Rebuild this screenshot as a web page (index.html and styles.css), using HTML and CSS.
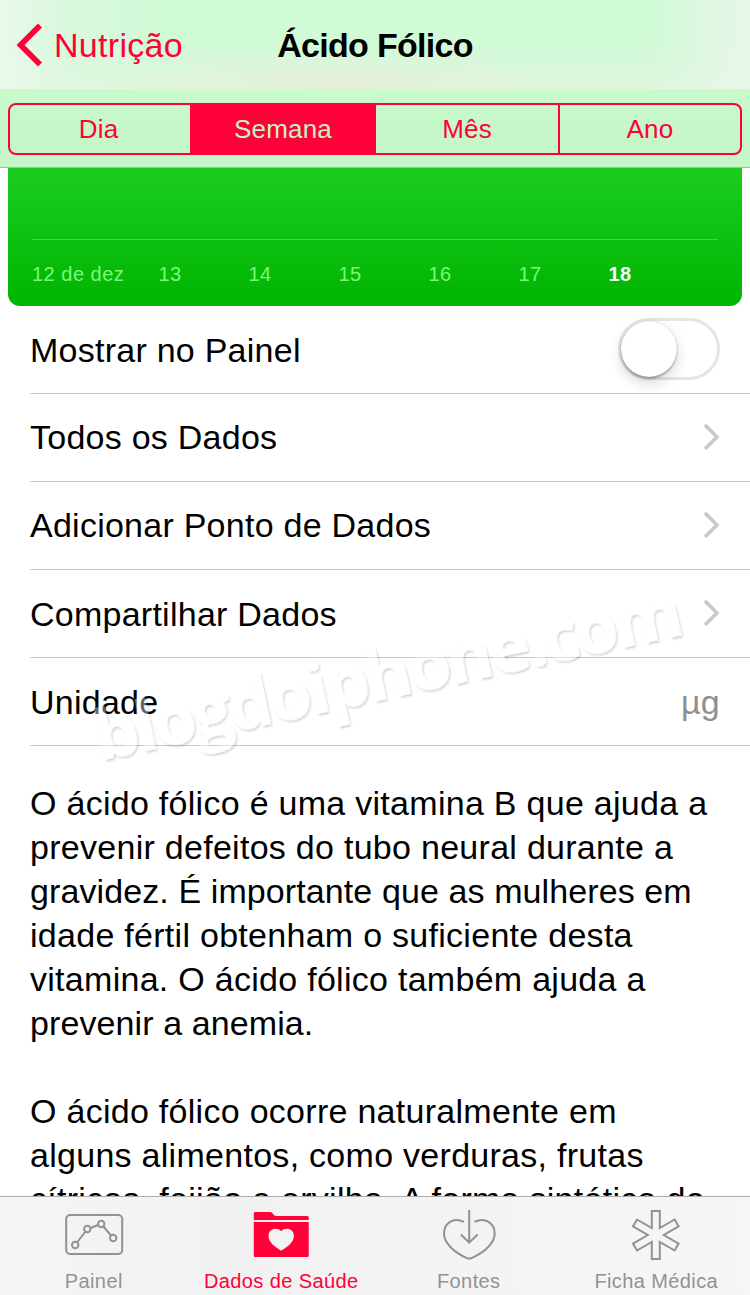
FILE: index.html
```html
<!DOCTYPE html>
<html lang="pt-BR">
	<head>
		<meta charset="utf-8">
		<title>Ácido Fólico</title>
		<link rel="stylesheet" href="styles.css">
	</head>
	<body>
		<div class="screen">
			<header class="navbar">
				<a class="back">
					<svg width="27" height="44" viewBox="0 0 27 44"><path d="M24 2.500L4.500 22l19.500 19.500" fill="none" stroke="#ff0038" stroke-width="5.600"/></svg>
					<span>Nutrição</span>
				</a>
				<h1>Ácido Fólico</h1>
			</header>

			<div class="range">
				<div class="segments">
					<span class="segment">Dia</span>
					<span class="segment active">Semana</span>
					<span class="segment">Mês</span>
					<span class="segment">Ano</span>
				</div>
			</div>

			<div class="chart">
				<div class="days">
					<span class="first">12 de dez</span>
					<span>13</span>
					<span>14</span>
					<span>15</span>
					<span>16</span>
					<span>17</span>
					<span class="today">18</span>
				</div>
			</div>

			<main class="content">
				<ul class="rows">
					<li class="row"><span>Mostrar no Painel</span><span class="switch"></span></li>
					<li class="row link"><span>Todos os Dados</span>
						<svg class="chevron" width="18" height="28" viewBox="0 0 18 28"><path d="M3 2L15 14 3 26"/></svg></li>
					<li class="row link"><span>Adicionar Ponto de Dados</span>
						<svg class="chevron" width="18" height="28" viewBox="0 0 18 28"><path d="M3 2L15 14 3 26"/></svg></li>
					<li class="row"><span>Compartilhar Dados</span>
						<svg class="chevron" width="18" height="28" viewBox="0 0 18 28"><path d="M3 2L15 14 3 26"/></svg></li>
					<li class="row"><span>Unidade</span><span class="unit">µg</span></li>
				</ul>

				<div class="about">
					<p>O ácido fólico é uma vitamina B que ajuda a<br>
					prevenir defeitos do tubo neural durante a<br>
					<span class="tight">gravidez. É importante que as mulheres em</span><br>
					idade fértil obtenham o suficiente desta<br>
					vitamina. O ácido fólico também ajuda a<br>
					<span class="tight">prevenir a anemia.</span></p>
					<p>O ácido fólico ocorre naturalmente em<br>
					alguns alimentos, como verduras, frutas<br>
					cítricas, feijão e ervilha. A forma sintética do</p>
				</div>
			</main>

			<nav class="tabbar">
				<a class="tab">
					<svg width="60" height="52" viewBox="0 0 60 52" fill="none" stroke="#929292" stroke-width="2">
						<rect x="2.200" y="7" width="56" height="39" rx="4"/>
						<path d="M13 34.500l8.500-11M26.500 20l7.500-3M39.500 18.500l7.500 9"/>
						<circle cx="11.200" cy="37" r="3.200"/>
						<circle cx="23.300" cy="21" r="3.200"/>
						<circle cx="37.200" cy="16" r="3.200"/>
						<circle cx="49.200" cy="30" r="3.200"/>
					</svg>
					<span>Painel</span>
				</a>
				<a class="tab selected">
					<svg width="60" height="52" viewBox="0 0 60 52" fill="#ff0038">
						<path d="M2.750 12V5.500q0-1.500 1.500-1.500H19q2 0 3 2l.5.500q1 1.500 3 1.500h30.700q1.500 0 1.500 1.500V12z"/>
						<path fill-rule="evenodd" d="M2.750 14h55v33.500q0 1.500-1.500 1.500h-52q-1.500 0-1.500-1.500zM30.200 42.800C36 39 42.900 34.500 42.900 28C42.900 20.500 34.500 18.800 30.200 23.200C25.900 18.800 17.500 20.500 17.500 28C17.500 34.500 24.500 39 30.200 42.800z"/>
					</svg>
					<span>Dados de Saúde</span>
				</a>
				<a class="tab">
					<svg width="60" height="52" viewBox="0 0 60 52" fill="none" stroke="#929292" stroke-width="2">
						<path d="M25 13.900C14.500 9 5 15 5 25.500C5 35 15 44.500 28 50.100Q30.200 51.100 32.400 50.100C45.500 44.500 55.700 35 55.700 25.500C55.700 15 46 9 35.400 13.900"/>
						<path d="M30.200 2v32M21.800 26.500l8.400 8 8.400-8"/>
					</svg>
					<span>Fontes</span>
				</a>
				<a class="tab">
					<svg width="60" height="52" viewBox="0 0 60 52" fill="none" stroke="#929292" stroke-width="2">
						<path transform="translate(29.800 27)" d="M-4-24H4V-6.900L18.800-15.500 22.800-8.600 8 0 22.800 8.600 18.800 15.500 4 6.900V24H-4V6.900L-18.800 15.500-22.800 8.600-8 0-22.800-8.600-18.800-15.500-4-6.900z"/>
					</svg>
					<span>Ficha Médica</span>
				</a>
			</nav>

			<svg class="watermark" width="750" height="260" viewBox="0 -20 750 260">
				<defs>
					<filter id="emboss" x="-5%" y="-20%" width="110%" height="140%">
						<feGaussianBlur in="SourceAlpha" stdDeviation="1"/>
						<feOffset dx="1" dy="2" result="shade"/>
						<feComposite in="shade" in2="SourceAlpha" operator="out"/>
						<feComponentTransfer result="edge"><feFuncA type="linear" slope=".19"/></feComponentTransfer>
						<feComponentTransfer in="SourceGraphic" result="face"><feFuncA type="linear" slope=".4"/></feComponentTransfer>
						<feMerge><feMergeNode in="edge"/><feMergeNode in="face"/></feMerge>
					</filter>
				</defs>
				<text transform="translate(100 201) rotate(-12.200)" textLength="600" fill="#fff" filter="url(#emboss)">blogdoiphone.com</text>
			</svg>
		</div>
	</body>
</html>
```
FILE: styles.css
```css
* {
	box-sizing: border-box;
}

body {
	margin: 0;
	background: #fff;
	color: #000;
	font-family: "Liberation Sans", Arial, sans-serif;
	font-size: 34px;
}

.screen {
	position: relative;
	display: flex;
	flex-direction: column;
	width: 750px;
	height: 1295px;
	overflow: hidden;
}

/* top bars */
.navbar {
	flex: none;
	display: grid;
	grid-template-columns: 1fr auto 1fr;
	align-items: center;
	height: 89px;
	padding: 2px 16px 0;
	background:
		radial-gradient(ellipse 240px 40px at 340px 89px, rgba(230, 238, 218, .9), transparent),
		linear-gradient(to right, #eaf8eb, rgba(225, 248, 226, .6) 60px, transparent 160px, transparent 650px, #e8f6e9),
		linear-gradient(#d1fad6 50%, #dff6de);
}

.back {
	display: flex;
	align-items: center;
	gap: 11px;
	color: #ff0038;
	letter-spacing: .3px;
}

.back svg {
	margin-bottom: 2px;
}

.navbar h1 {
	margin: 0;
	font-size: 34px;
	letter-spacing: -.7px;
}

.range {
	flex: none;
	height: 79px;
	padding: 14px 8px 0;
	background: linear-gradient(#c9facc, #c3f5c6);
	border-bottom: 1px solid #a5b9a7;
}

.segments {
	display: grid;
	grid-template-columns: 180px 186px 182px 182px;
	height: 52px;
	border: 2px solid #ff0038;
	border-radius: 8px;
}

.segment {
	color: #ff0038;
	font-size: 26px;
	line-height: 48px;
	text-align: center;
	letter-spacing: .2px;
}

.segment:first-child {
	padding-right: 3px;
}

.segment.active {
	background: #ff0038;
	color: #c9f2c4;
}

.segment:last-child {
	border-left: 2px solid #ff0038;
}

/* chart */
.chart {
	flex: none;
	height: 138px;
	margin: 0 8px;
	padding: 71px 24px 0;
	background: linear-gradient(#1ccd20, #00b400);
	border-radius: 0 0 12px 12px;
}

.days {
	display: grid;
	grid-template-columns: 93px repeat(6, 90px);
	border-top: 1px solid #18f51c;
	padding-top: 22px;
	color: #7cf97c;
	font-size: 20px;
	line-height: 24px;
	text-align: center;
	letter-spacing: .5px;
}

.days .first {
	text-align: left;
	white-space: nowrap;
}

.days .today {
	color: #fff;
	font-weight: bold;
}

/* list */
.content {
	flex: 1;
	min-height: 0;
	overflow: hidden;
}

.rows {
	margin: 0;
	padding: 0 0 0 30px;
	list-style: none;
}

.row {
	display: flex;
	align-items: center;
	justify-content: space-between;
	height: 88px;
	padding-top: 1px;
	padding-right: 30px;
	border-bottom: 1px solid #c8c7cc;
	letter-spacing: .25px;
}

.row.link span {
	margin-bottom: 2px;
}

.chevron {
	margin-bottom: 2px;
	fill: none;
	stroke: #c7c7cc;
	stroke-width: 3.500;
}

.unit {
	color: #8e8e93;
}

.switch {
	width: 102px;
	height: 62px;
	border: 3px solid #e5e5e5;
	border-radius: 31px;
	margin-bottom: 2px;
}

.switch::before {
	content: "";
	display: block;
	width: 56px;
	height: 56px;
	border-radius: 50%;
	background: #fff;
	box-shadow: 0 0 1px rgba(0, 0, 0, .3), 0 2px 2px rgba(0, 0, 0, .25), 0 6px 14px rgba(0, 0, 0, .16);
}

.about {
	padding: 35px 0 0 30px;
	line-height: 44px;
	white-space: nowrap;
	letter-spacing: .28px;
}

.about .tight {
	letter-spacing: .1px;
}

.about p {
	margin: 0 0 44px;
}

/* bottom tabs */
.tabbar {
	flex: none;
	display: grid;
	grid-template-columns: repeat(4, 1fr);
	height: 99px;
	border-top: 1px solid #adadad;
	background: linear-gradient(to right, #f5f5f5, #f1f1f1 30%, #f3f3f3 60%, #f6f6f6);
}

.tab {
	display: flex;
	flex-direction: column;
	align-items: center;
	padding-top: 11px;
	color: #929292;
	font-size: 20px;
	line-height: 24px;
	letter-spacing: .4px;
}

.tab span {
	margin-top: 9px;
}

.tab.selected {
	color: #ff0038;
}

/* diagonal mark over the list */
.watermark {
	position: absolute;
	left: 0;
	top: 540px;
	overflow: visible;
	font: 700 70px "Open Sans", sans-serif;
}
```
